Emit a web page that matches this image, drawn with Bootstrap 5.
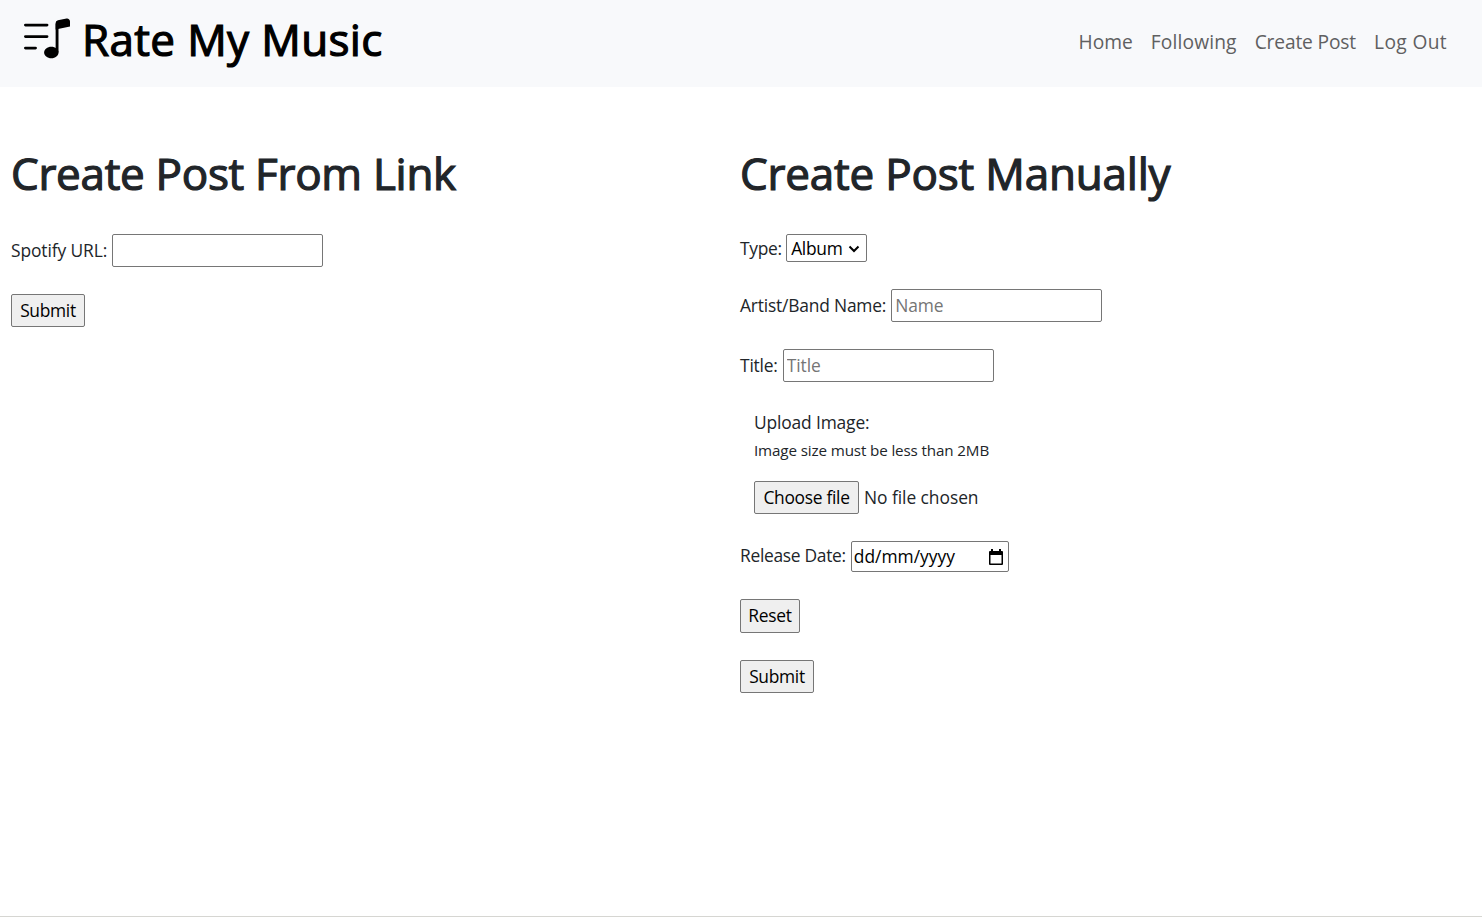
<!DOCTYPE html>
<html lang="en">
<head>
<meta charset="utf-8">
<meta name="viewport" content="width=device-width, initial-scale=1">
<title>Rate My Music</title>
<link href="https://cdn.jsdelivr.net/npm/bootstrap@5.3.0/dist/css/bootstrap.min.css" rel="stylesheet">
<style>
  html { font-size: 17.6px; }
  body { font-family: "Open Sans", "Noto Sans", sans-serif; font-size: 17.4px; color: #212529; height: 917px; overflow: hidden; border-bottom: 1px solid #d6d6d2; letter-spacing: -.3px; }
  .site-bar { height: 87px; background: #f8f9fb; padding: 0 35px 0 24px; }
  .site-bar svg { width: 46px; height: 46px; margin: 15px 12px 0 0; }
  .site-bar .title, .page-title { font-size: 44px; font-weight: 400; line-height: 53px; margin: 0; white-space: nowrap; -webkit-text-stroke: 1.2px currentColor; }
  .site-bar .title { color: #000; margin-top: 13px; letter-spacing: .35px; }
  .site-bar .nav-link { color: #5f6061; font-size: 19.2px; line-height: 26px; padding: 0; margin-top: 29px; letter-spacing: 0; }
  .site-bar .l-following { letter-spacing: .15px; }
  .site-bar .l-create { letter-spacing: -.15px; }
  .site-bar .l-logout { letter-spacing: .35px; }
  .links { gap: 18px; }
  .panes { padding-top: 60px; }
  .panes > .pane-a { width: 729px; padding: 0 11px; }
  .panes > .pane-b { width: 753px; padding: 0 11px; }
  .panes .page-title { margin-bottom: 34px; }
  .pane-b .page-title { letter-spacing: -.2px; }
  .stack { display: flex; flex-direction: column; align-items: flex-start; gap: 27px; white-space: nowrap; }
  .field { display: flex; align-items: center; }
  .field label { margin-right: 5px; line-height: 26px; }
  .field .loose { letter-spacing: -.19px; padding-bottom: 2px; }
  .field .url-label { letter-spacing: -.1px; }
  .field .date-label { padding-bottom: 2px; }
  .box { border: 1px solid #767676; border-radius: 2px; background: #fff; color: #000; height: 33px; padding: 0 3px; letter-spacing: inherit; }
  .txt { width: 211px; letter-spacing: -.1px; padding-bottom: 2px; }
  .txt::placeholder { color: #757575; opacity: 1; }
  .kind { width: 81px; height: 28px; padding: 0 0 0 4px; appearance: none; background: #fff url("data:image/svg+xml,%3Csvg xmlns='http://www.w3.org/2000/svg' width='12' height='8' viewBox='0 0 12 8'%3E%3Cpath d='M1.500 1.500L6 6l4.500-4.500' fill='none' stroke='%23000' stroke-width='2'/%3E%3C/svg%3E") no-repeat right 6px top 10px; }
  .push { background: #efefef; padding: 0; width: 74px; }
  .choose { width: 105px; }
  .reset { width: 60px; height: 34px; padding-bottom: 2px; }
  .date { width: 158px; height: 31px; padding: 0 4px 0 2px; letter-spacing: 0; }
  .upload { padding-left: 14px; }
  .upload-label { line-height: 27px; letter-spacing: -.15px; }
  .hint { font-size: 15.2px; line-height: 24px; margin: 2px 0 19px; letter-spacing: -.13px; }
  .file-state { letter-spacing: -.05px; margin-left: 5px; }
</style>
</head>
<body>
<nav class="site-bar d-flex align-items-start">
  <svg viewBox="0 0 16 16" fill="#000"><path d="M12 13c0 1.105-1.12 2-2.5 2S7 14.105 7 13s1.12-2 2.5-2 2.5.895 2.5 2z"/><path d="M12 3v10h-1V3h1z"/><path d="M11 2.82a1 1 0 0 1 .804-.98l3-.6A1 1 0 0 1 16 2.22V4l-5 1V2.82z"/><path d="M0 11.5a.5.5 0 0 1 .5-.5H4a.5.5 0 0 1 0 1H.5a.5.5 0 0 1-.5-.5zm0-4A.5.5 0 0 1 .5 7H8a.5.5 0 0 1 0 1H.5a.5.5 0 0 1-.5-.5zm0-4A.5.5 0 0 1 .5 3H8a.5.5 0 0 1 0 1H.5a.5.5 0 0 1-.5-.5z"/></svg>
  <h1 class="title">Rate My Music</h1>
  <div class="links d-flex ms-auto">
    <a class="nav-link" href="#">Home</a>
    <a class="nav-link l-following" href="#">Following</a>
    <a class="nav-link l-create" href="#">Create Post</a>
    <a class="nav-link l-logout" href="#">Log Out</a>
  </div>
</nav>
<main class="panes row g-0">
  <div class="pane-a">
    <h1 class="page-title">Create Post From Link</h1>
    <form class="stack">
      <div class="field"><label class="loose url-label" for="url">Spotify URL:</label><input id="url" class="box txt"></div>
      <button type="button" class="box push">Submit</button>
    </form>
  </div>
  <div class="pane-b">
    <h1 class="page-title">Create Post Manually</h1>
    <form class="stack">
      <div class="field"><label class="me-1" for="kind">Type:</label><select id="kind" class="box kind"><option>Album</option></select></div>
      <div class="field"><label class="loose" for="artist">Artist/Band Name:</label><input id="artist" class="box txt" placeholder="Name"></div>
      <div class="field"><label class="loose" for="name">Title:</label><input id="name" class="box txt" placeholder="Title"></div>
      <div class="upload">
        <div class="upload-label">Upload Image:</div>
        <div class="hint">Image size must be less than 2MB</div>
        <div class="field"><button type="button" class="box push choose">Choose file</button><span class="file-state">No file chosen</span></div>
      </div>
      <div class="field date-field"><label class="date-label lh-1">Release Date:</label><div class="box date d-flex align-items-center justify-content-between"><span>dd/mm/yyyy</span><svg width="16" height="18" viewBox="0 0 16 18"><path fill="#000" fill-rule="evenodd" d="M3 1h2v2h6V1h2v2h1q1 0 1 1v12q0 1-1 1H2q-1 0-1-1V4q0-1 1-1h1zM2.500 7v8.500h11V7z"/></svg></div></div>
      <button type="button" class="box push reset">Reset</button>
      <button type="button" class="box push">Submit</button>
    </form>
  </div>
</main>
<script src="https://cdn.jsdelivr.net/npm/bootstrap@5.3.0/dist/js/bootstrap.bundle.min.js"></script>
</body>
</html>
